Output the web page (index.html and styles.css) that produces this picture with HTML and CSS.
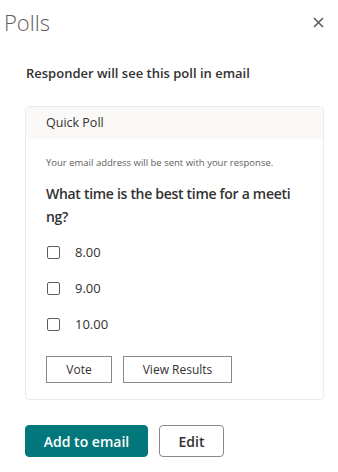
FILE: index.html
```html
<!DOCTYPE html>
<html>
<head>
<meta charset="utf-8">
<link rel="stylesheet" href="styles.css">
</head>
<body>
<div class="panel">
  <div class="header">
    <h1 class="title">Polls</h1>
    <button class="close" aria-label="Close">
      <svg width="11" height="11" viewBox="0 0 11 11"><path d="M1 1L10 10M10 1L1 10" stroke="#605e5c" stroke-width="1.6" fill="none"/></svg>
    </button>
  </div>
  <p class="intro">Responder will see this poll in email</p>
  <div class="card">
    <div class="card-head">Quick Poll</div>
    <div class="card-body">
      <p class="note">Your email address will be sent with your response.</p>
      <p class="question">What time is the best time for a meeting?</p>
      <ul class="options">
        <li class="option"><span class="box"></span><span>8.00</span></li>
        <li class="option"><span class="box"></span><span>9.00</span></li>
        <li class="option"><span class="box"></span><span>10.00</span></li>
      </ul>
      <div class="card-actions">
        <button class="btn vote">Vote</button>
        <button class="btn results">View Results</button>
      </div>
    </div>
  </div>
  <div class="actions">
    <button class="primary">Add to email</button>
    <button class="secondary">Edit</button>
  </div>
</div>
</body>
</html>
```
FILE: styles.css
```css
* { box-sizing: border-box; }
html, body { margin: 0; background: #fff; }
body {
  font-family: "Open Sans", "Noto Sans", sans-serif;
  color: #323130;
  width: 338px;
  height: 472px;
  overflow: hidden;
}
.panel { padding: 0 14px 0 25px; }
.header {
  display: flex;
  justify-content: space-between;
  align-items: center;
  height: 44px;
  margin-left: -21px;
}
.title {
  margin: 0;
  font-size: 22px;
  font-weight: 300;
  color: #605e5c;
  line-height: 30px;
}
.close {
  border: 0;
  background: none;
  padding: 0;
  width: 11px;
  height: 11px;
  display: flex;
}
.intro {
  margin: 19px 0 0 1px;
  font-size: 13px;
  font-weight: 600;
  line-height: 20px;
  color: #323130;
}
.card {
  margin-top: 23px;
  border: 1px solid #edebe9;
  border-radius: 4px;
  box-shadow: 0 0 1px rgba(0,0,0,0.04);
  overflow: hidden;
}
.card-head {
  background: #faf9f8;
  height: 32px;
  line-height: 32px;
  padding-left: 20px;
  font-size: 12.5px;
  color: #323130;
}
.card-body { padding: 12px 20px 16px 20px; }
.note {
  margin: 0;
  font-size: 9.5px;
  line-height: 24px;
  color: #605e5c;
}
.question {
  margin: 7px 0 0 0;
  font-size: 14px;
  letter-spacing: -0.3px;
  font-weight: 600;
  line-height: 23px;
  word-break: break-all;
  width: 248px;
}
.options { list-style: none; margin: 6px 0 0 0; padding: 0; }
.option {
  display: flex;
  align-items: center;
  height: 36px;
  font-size: 13px;
  color: #323130;
}
.box {
  width: 13px;
  height: 13px;
  border: 1px solid #605e5c;
  border-radius: 2px;
  margin: 0 15px 0 1px;
}
.card-actions { display: flex; gap: 11px; margin-top: 14px; }
.btn {
  font-family: inherit;
  height: 27px;
  border: 1px solid #8a8886;
  background: #fff;
  border-radius: 0;
  font-size: 12px;
  color: #323130;
  padding: 0;
}
.vote { width: 66px; }
.results { width: 109px; }
.actions { display: flex; gap: 11px; margin-top: 25px; }
.primary, .secondary {
  font-family: inherit;
  height: 32px;
  border-radius: 4px;
  font-size: 14px;
  font-weight: 600;
  padding: 0;
}
.primary {
  width: 123px;
  background: #03787c;
  border: 1px solid #03787c;
  color: #fff;
}
.secondary {
  width: 65px;
  background: #fff;
  border: 1px solid #8a8886;
  color: #323130;
}
```
